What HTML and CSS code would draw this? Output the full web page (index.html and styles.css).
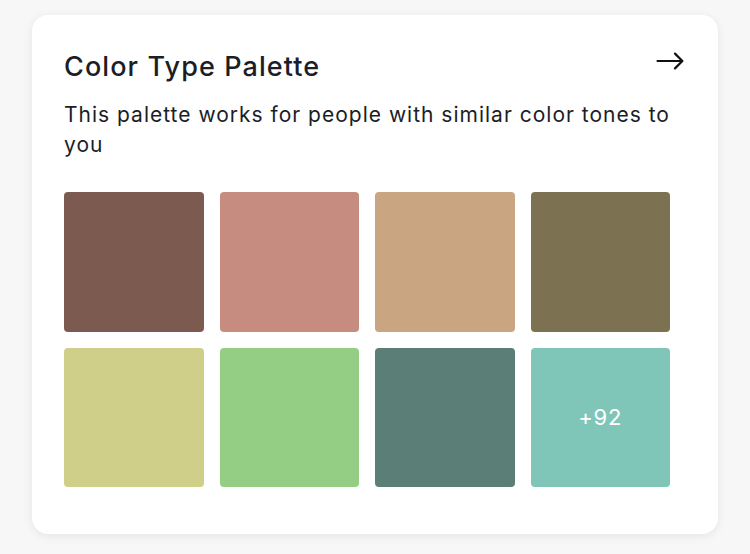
FILE: index.html
```html
<!DOCTYPE html>
<html lang="en">
<head>
    <meta charset="UTF-8">
    <meta name="viewport" content="width=device-width, initial-scale=1.0">
    <title>Color Type Palette</title>
    <link rel="stylesheet" href="styles.css">
</head>
<body>
    <div class="card">
        <div class="card-header">
            <h2>Color Type Palette</h2>
            <a class="arrow-link" href="#" aria-label="Open palette">
                <svg width="28" height="20" viewBox="0 0 28 20" fill="none" stroke="currentColor" stroke-width="2.2" stroke-linecap="round" stroke-linejoin="round">
                    <path d="M1.5 10H26"/>
                    <path d="M19 2.6L26.4 10L19 17.4"/>
                </svg>
            </a>
        </div>
        <p class="description">This palette works for people with similar color tones to you</p>
        <div class="swatches">
            <div class="swatch" style="background-color: #7c5a50;"></div>
            <div class="swatch" style="background-color: #c68c7f;"></div>
            <div class="swatch" style="background-color: #c9a582;"></div>
            <div class="swatch" style="background-color: #7c7251;"></div>
            <div class="swatch" style="background-color: #cfcf8a;"></div>
            <div class="swatch" style="background-color: #94ce85;"></div>
            <div class="swatch" style="background-color: #5b7f77;"></div>
            <div class="swatch more" style="background-color: #7fc6b8;">+92</div>
        </div>
    </div>
</body>
</html>
```

FILE: styles.css
```css
body {
    font-family: Inter, "Noto Sans", sans-serif;
    margin: 0;
    padding: 15px 32px;
    background-color: #f7f7f7;
    color: #1b1e26;
}
.card {
    width: 686px;
    height: 519px;
    box-sizing: border-box;
    background-color: #fff;
    border-radius: 16px;
    box-shadow: 0 2px 10px rgba(0, 0, 0, 0.08);
    padding: 36px 32px 0 32px;
}
.card-header {
    display: flex;
    justify-content: space-between;
    align-items: flex-start;
}
.card-header h2 {
    margin: 0;
    font-size: 27px;
    line-height: 32px;
    font-weight: 500;
    letter-spacing: 1.1px;
}
.arrow-link {
    color: #111;
    display: block;
    margin-right: 2px;
}
.arrow-link svg {
    display: block;
}
.description {
    margin: 17px 0 32px 0;
    font-size: 21px;
    line-height: 30px;
    letter-spacing: 1px;
}
.swatches {
    width: 606px;
    display: grid;
    grid-template-columns: repeat(4, 1fr);
    gap: 16px;
}
.swatch {
    aspect-ratio: 1;
    border-radius: 4px;
}
.swatch.more {
    display: flex;
    align-items: center;
    justify-content: center;
    color: #fff;
    font-size: 22px;
    letter-spacing: 0.8px;
}
```
